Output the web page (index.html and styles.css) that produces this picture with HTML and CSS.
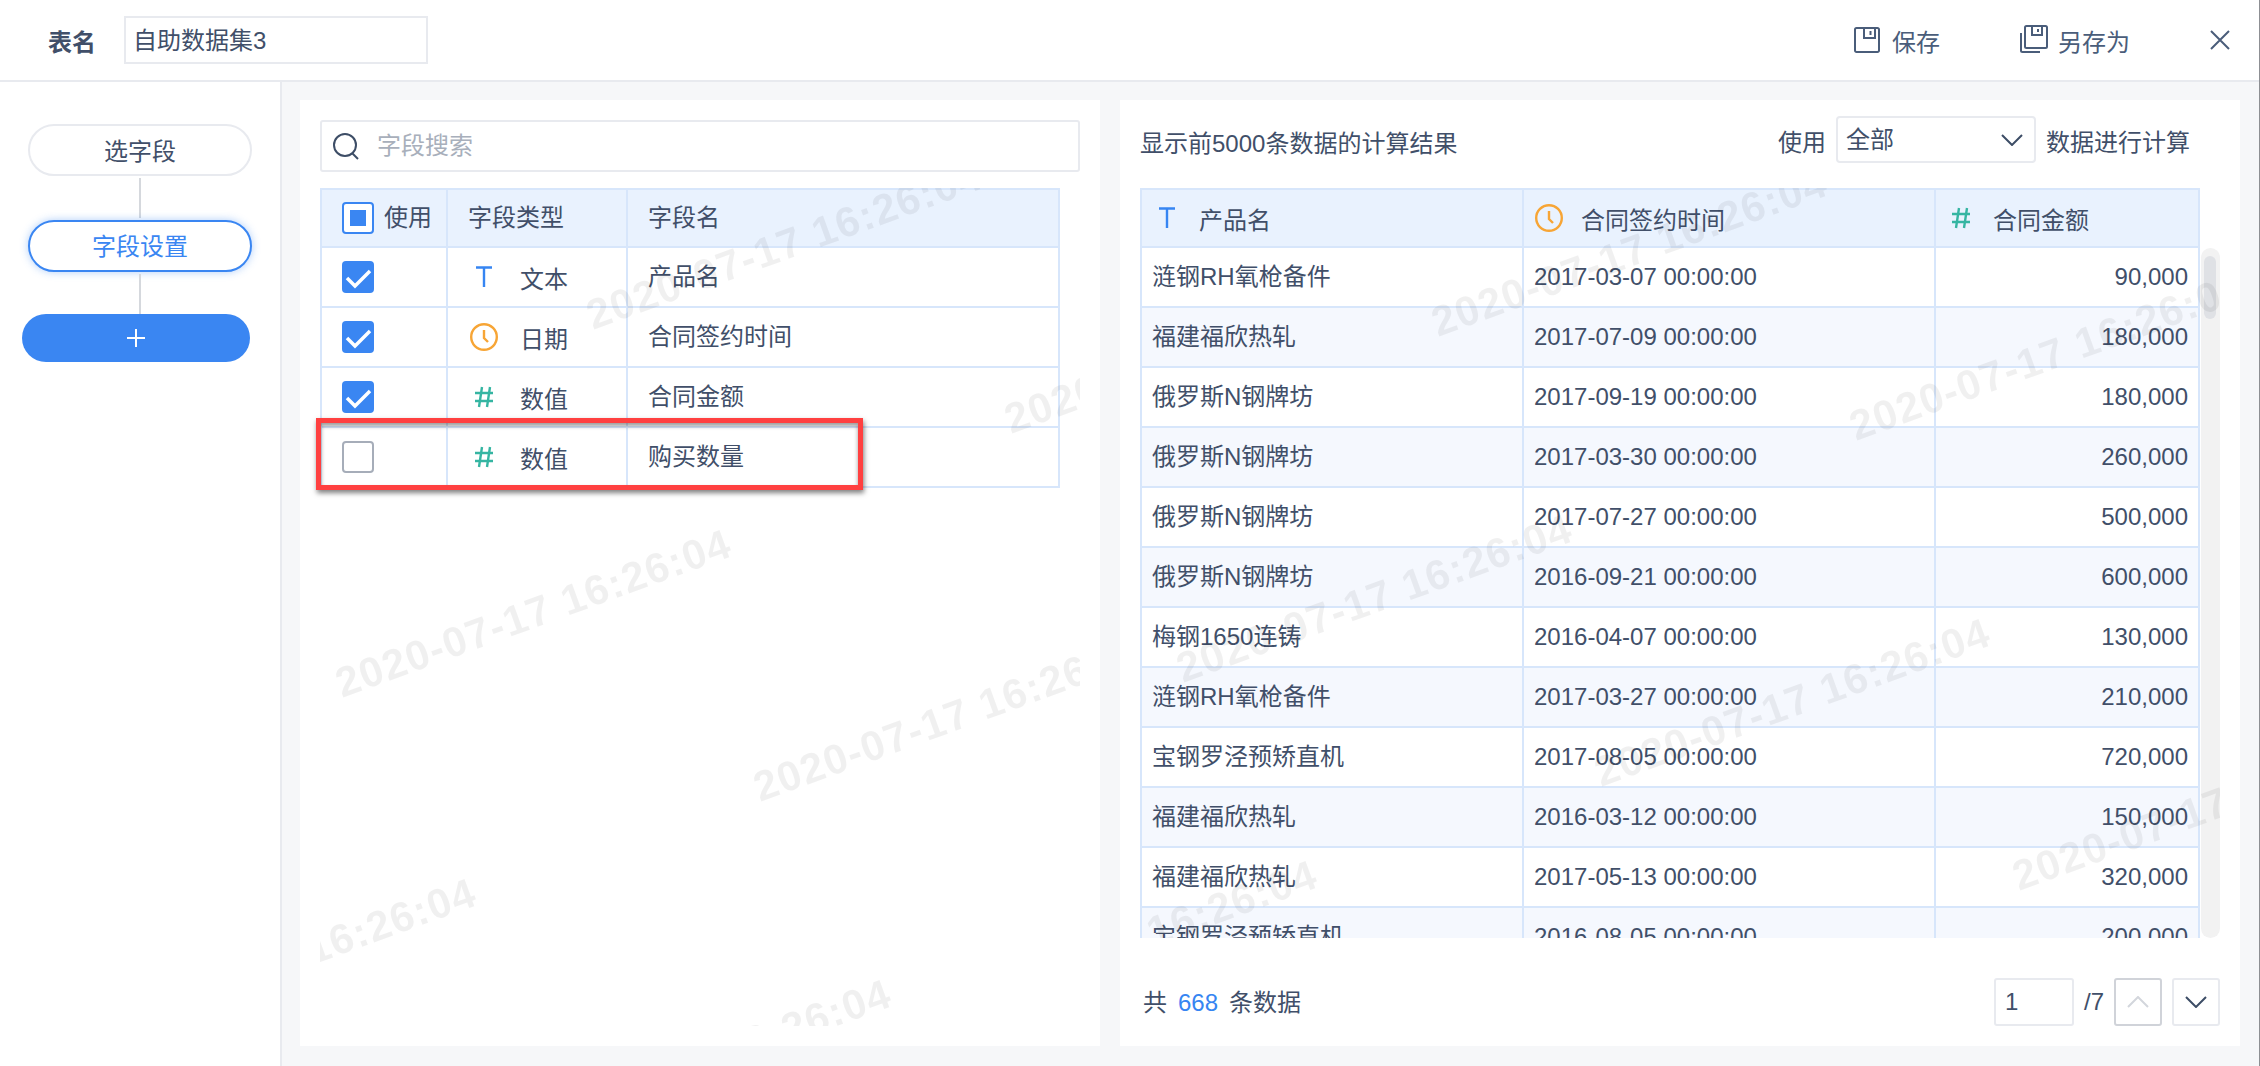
FILE: index.html
```html
<!DOCTYPE html>
<html lang="zh-CN">
<head>
<meta charset="utf-8">
<title>自助数据集3</title>
<link rel="stylesheet" href="styles.css">
</head>
<body>
<div class="app">
  <header class="topbar">
    <span class="name-label">表名</span>
    <div class="name-input">自助数据集3</div>
    <div class="actions">
      <div class="action save">
        <svg class="ico-save" viewBox="0 0 26 26" fill="none" stroke="#4a5d7a" stroke-width="2"><path d="M2.500 1h21a1.500 1.500 0 0 1 1.500 1.500v21a1.500 1.500 0 0 1-1.500 1.500h-21a1.500 1.500 0 0 1-1.500-1.500v-21a1.500 1.500 0 0 1 1.500-1.500z"/><path d="M10 1v10h11V1"/><path d="M16.500 4v4"/></svg>
        <span>保存</span>
      </div>
      <div class="action saveas">
        <svg class="ico-saveas" viewBox="0 0 28 28" fill="none" stroke="#4a5d7a" stroke-width="2"><path d="M6.500 1h19a1.500 1.500 0 0 1 1.500 1.500v19a1.500 1.500 0 0 1-1.500 1.500h-19a1.500 1.500 0 0 1-1.500-1.500v-19a1.500 1.500 0 0 1 1.500-1.500z"/><path d="M12 1v9h10V1"/><path d="M18 4v3"/><path d="M1 8v17.500a1.500 1.500 0 0 0 1.500 1.500H20"/></svg>
        <span>另存为</span>
      </div>
      <svg class="ico-close" viewBox="0 0 20 20" fill="none" stroke="#4a5d7a" stroke-width="2"><path d="M1 1l18 18M19 1L1 19"/></svg>
    </div>
  </header>

  <div class="main">
    <nav class="steps">
      <div class="pill">选字段</div>
      <div class="link"></div>
      <div class="pill active">字段设置</div>
      <div class="link last"></div>
      <div class="add"><svg viewBox="0 0 18 18" stroke="#fff" stroke-width="2"><path d="M9 0v18M0 9h18"/></svg></div>
    </nav>

    <section class="panel left">
      <div class="search">
        <svg class="ico-search" viewBox="0 0 26 27" fill="none" stroke="#3d4d66" stroke-width="2"><circle cx="12" cy="12" r="11"/><path d="M19 20l6 6"/></svg>
        <span>字段搜索</span>
      </div>
      <table class="grid fields">
        <colgroup><col class="f1"><col class="f2"><col class="f3"></colgroup>
        <thead>
          <tr>
            <th><div class="use"><span class="cb partial"><i></i></span><span>使用</span></div></th>
            <th>字段类型</th>
            <th>字段名</th>
          </tr>
        </thead>
        <tbody>
          <tr>
            <td><span class="cb on"><svg viewBox="0 0 32 32" fill="none" stroke="#fff" stroke-width="3.500"><path d="M5 17l8 8 15-15"/></svg></span></td>
            <td><div class="ftype"><svg class="ti" viewBox="0 0 28 22" fill="none" stroke="#3685f2" stroke-width="2.400"><path d="M6 1.500h16M14 1.500V21"/></svg><span>文本</span></div></td>
            <td>产品名</td>
          </tr>
          <tr>
            <td><span class="cb on"><svg viewBox="0 0 32 32" fill="none" stroke="#fff" stroke-width="3.500"><path d="M5 17l8 8 15-15"/></svg></span></td>
            <td><div class="ftype"><svg class="ti" viewBox="0 0 28 28" fill="none" stroke="#f7a535" stroke-width="2.400"><circle cx="14" cy="14" r="12.800"/><path d="M14 7v8l4 4"/></svg><span>日期</span></div></td>
            <td>合同签约时间</td>
          </tr>
          <tr>
            <td><span class="cb on"><svg viewBox="0 0 32 32" fill="none" stroke="#fff" stroke-width="3.500"><path d="M5 17l8 8 15-15"/></svg></span></td>
            <td><div class="ftype"><svg class="ti" viewBox="0 0 28 22" fill="none" stroke="#35b5a2" stroke-width="2.400"><path d="M5 7h18M5 15h18M12 1L9 21M20 1l-3 20"/></svg><span>数值</span></div></td>
            <td>合同金额</td>
          </tr>
          <tr>
            <td><span class="cb off"></span></td>
            <td><div class="ftype"><svg class="ti" viewBox="0 0 28 22" fill="none" stroke="#35b5a2" stroke-width="2.400"><path d="M5 7h18M5 15h18M12 1L9 21M20 1l-3 20"/></svg><span>数值</span></div></td>
            <td>购买数量</td>
          </tr>
        </tbody>
      </table>
      <svg class="wm wm-left" viewBox="320 188 760 838">
        <text transform="translate(593 330) rotate(-20)">2020-07-17 16:26:04</text>
        <text transform="translate(342 698) rotate(-20)">2020-07-17 16:26:04</text>
        <text transform="translate(1011 434) rotate(-20)">2020-07-17 16:26:04</text>
        <text transform="translate(760 802) rotate(-20)">2020-07-17 16:26:04</text>
        <text transform="translate(87 1047) rotate(-20)">2020-07-17 16:26:04</text>
        <text transform="translate(502 1148) rotate(-20)">2020-07-17 16:26:04</text>
      </svg>
      <div class="callout"></div>
    </section>

    <section class="panel right">
      <div class="toolbar">
        <span class="title">显示前5000条数据的计算结果</span>
        <div class="scope">
          <span class="lbl">使用</span>
          <div class="select">
            <span>全部</span>
            <svg viewBox="0 0 22 12" fill="none" stroke="#3d4d66" stroke-width="2"><path d="M1 1l10 10L21 1"/></svg>
          </div>
          <span class="lbl">数据进行计算</span>
        </div>
      </div>
      <div class="result">
        <table class="grid data">
          <colgroup><col class="d1"><col class="d2"><col class="d3"></colgroup>
          <thead>
            <tr>
              <th><div class="dhead"><svg class="ti" viewBox="0 0 28 22" fill="none" stroke="#3685f2" stroke-width="2.400"><path d="M6 1.500h16M14 1.500V21"/></svg><span>产品名</span></div></th>
              <th><div class="dhead"><svg class="ti" viewBox="0 0 28 28" fill="none" stroke="#f7a535" stroke-width="2.400"><circle cx="14" cy="14" r="12.800"/><path d="M14 7v8l4 4"/></svg><span>合同签约时间</span></div></th>
              <th><div class="dhead"><svg class="ti" viewBox="0 0 28 22" fill="none" stroke="#35b5a2" stroke-width="2.400"><path d="M5 7h18M5 15h18M12 1L9 21M20 1l-3 20"/></svg><span>合同金额</span></div></th>
            </tr>
          </thead>
          <tbody>
            <tr><td>涟钢RH氧枪备件</td><td>2017-03-07 00:00:00</td><td class="num">90,000</td></tr>
            <tr><td>福建福欣热轧</td><td>2017-07-09 00:00:00</td><td class="num">180,000</td></tr>
            <tr><td>俄罗斯N钢牌坊</td><td>2017-09-19 00:00:00</td><td class="num">180,000</td></tr>
            <tr><td>俄罗斯N钢牌坊</td><td>2017-03-30 00:00:00</td><td class="num">260,000</td></tr>
            <tr><td>俄罗斯N钢牌坊</td><td>2017-07-27 00:00:00</td><td class="num">500,000</td></tr>
            <tr><td>俄罗斯N钢牌坊</td><td>2016-09-21 00:00:00</td><td class="num">600,000</td></tr>
            <tr><td>梅钢1650连铸</td><td>2016-04-07 00:00:00</td><td class="num">130,000</td></tr>
            <tr><td>涟钢RH氧枪备件</td><td>2017-03-27 00:00:00</td><td class="num">210,000</td></tr>
            <tr><td>宝钢罗泾预矫直机</td><td>2017-08-05 00:00:00</td><td class="num">720,000</td></tr>
            <tr><td>福建福欣热轧</td><td>2016-03-12 00:00:00</td><td class="num">150,000</td></tr>
            <tr><td>福建福欣热轧</td><td>2017-05-13 00:00:00</td><td class="num">320,000</td></tr>
            <tr><td>宝钢罗泾预矫直机</td><td>2016-08-05 00:00:00</td><td class="num">200,000</td></tr>
          </tbody>
        </table>
        <div class="scrolltrack"><div class="scrollthumb"></div></div>
      </div>
      <svg class="wm wm-right" viewBox="1140 188 1080 750">
        <text transform="translate(1438 337) rotate(-20)">2020-07-17 16:26:04</text>
        <text transform="translate(1856 441) rotate(-20)">2020-07-17 16:26:04</text>
        <text transform="translate(1183 683) rotate(-20)">2020-07-17 16:26:04</text>
        <text transform="translate(1601 787) rotate(-20)">2020-07-17 16:26:04</text>
        <text transform="translate(2019 891) rotate(-20)">2020-07-17 16:26:04</text>
        <text transform="translate(928 1029) rotate(-20)">2020-07-17 16:26:04</text>
      </svg>
      <div class="pager">
        <div class="total">共<span class="count">668</span>条数据</div>
        <div class="pages">
          <div class="page-input">1</div>
          <span class="page-total">/7</span>
          <div class="page-btn disabled"><svg viewBox="0 0 22 12" fill="none" stroke="#d3d6dc" stroke-width="2"><path d="M1 11L11 1l10 10"/></svg></div>
          <div class="page-btn"><svg viewBox="0 0 22 12" fill="none" stroke="#3d4d66" stroke-width="2"><path d="M1 1l10 10L21 1"/></svg></div>
        </div>
      </div>
    </section>
  </div>
</div>
</body>
</html>
```

FILE: styles.css
```css
* { box-sizing: border-box; }
html, body { margin: 0; padding: 0; }
body {
  width: 2260px;
  height: 1066px;
  overflow: hidden;
  font-family: "Liberation Sans", "Noto Sans CJK SC", sans-serif;
  font-size: 24px;
  color: #414f69;
  background: #fff;
}
.app {
  width: 2260px;
  height: 1066px;
  display: flex;
  flex-direction: column;
  border-right: 1px solid #8d8f93;
}

/* top bar */
.topbar {
  height: 82px;
  flex: none;
  display: flex;
  align-items: center;
  padding-left: 48px;
  border-bottom: 2px solid #e8eaef;
}
.name-label { font-weight: 700; width: 76px; }
.name-input {
  width: 304px;
  height: 48px;
  border: 2px solid #e8eaef;
  padding: 0 0 3px 7px;
  display: flex;
  align-items: center;
}
.actions { margin-left: auto; display: flex; align-items: center; }
.action { display: flex; align-items: center; color: #4a5d7a; }
.ico-save { width: 26px; height: 26px; margin-right: 12px; }
.ico-saveas { width: 28px; height: 28px; margin-right: 10px; margin-top: -2px; }
.save { margin-right: 80px; }
.saveas { margin-right: 80px; }
.ico-close { width: 20px; height: 20px; margin-right: 29px; }

/* layout */
.main { flex: 1; min-height: 0; display: flex; background: #f6f7f9; }
.steps {
  width: 282px;
  flex: none;
  background: #fff;
  border-right: 2px solid #e8eaef;
  padding: 42px 0 0 22px;
  display: flex;
  flex-direction: column;
  align-items: flex-start;
}
.pill {
  margin-left: 6px;
  width: 224px;
  height: 52px;
  border: 2px solid #e8eaef;
  border-radius: 26px;
  padding-bottom: 2px;
  display: flex;
  align-items: center;
  justify-content: center;
  background: #fff;
}
.pill.active {
  border-color: #3a86f2;
  color: #3a86f2;
  padding-bottom: 4px;
  box-shadow: 0 0 8px rgba(58, 134, 242, .4);
}
.link {
  width: 2px;
  height: 40px;
  margin: 2px 0 2px 117px;
  background: #d5d8dd;
}
.link.last { margin-bottom: 0; }
.add {
  width: 228px;
  height: 48px;
  border-radius: 24px;
  background: #3a86f2;
  display: flex;
  align-items: center;
  justify-content: center;
}
.add svg { width: 18px; height: 18px; }

.panel {
  position: relative;
  background: #fff;
  height: 946px;
  margin-top: 18px;
  padding: 20px;
}
.panel.left { width: 800px; margin-left: 18px; }
.panel.right { width: 1120px; margin-left: 20px; padding-top: 16px; }

/* search */
.search {
  height: 52px;
  border: 2px solid #e8eaef;
  border-radius: 3px;
  display: flex;
  align-items: center;
  padding-left: 11px;
  color: #a8afbb;
}
.search span { margin-bottom: 5px; }
.ico-search { width: 26px; height: 27px; margin-right: 18px; }

/* tables */
.grid {
  border-collapse: separate;
  border-spacing: 0;
  table-layout: fixed;
  border-top: 2px solid #d7e6fb;
  border-left: 2px solid #d7e6fb;
}
.grid th, .grid td {
  padding: 0;
  border-right: 2px solid #d7e6fb;
  border-bottom: 2px solid #d7e6fb;
  font-weight: 400;
  text-align: left;
  line-height: 32px;
  height: 60px;
}
.grid th { height: 58px; background: #e9f2fe; }

.fields { margin-top: 16px; width: 740px; }
.f1 { width: 126px; }
.f2 { width: 180px; }
.f3 { width: 432px; }
.fields th, .fields td { padding-left: 20px; }
.fields td:nth-child(2) { padding-left: 0; }
.use { display: flex; align-items: center; gap: 10px; }
.cb {
  display: block;
  width: 32px;
  height: 32px;
  border-radius: 4px;
}
.cb svg { display: block; width: 32px; height: 32px; }
.cb.on { background: #3a86f2; }
.cb.off { border: 2px solid #a6adb9; background: #fff; }
.cb.partial {
  border: 2px solid #3a86f2;
  background: #fff;
  display: flex;
  align-items: center;
  justify-content: center;
}
.cb.partial i { display: block; width: 16px; height: 16px; background: #3a86f2; }
.ftype { display: flex; align-items: center; padding-left: 22px; gap: 22px; }
.ftype span { margin-top: 6px; }
.ti { width: 28px; height: 28px; flex: none; }

.result { position: relative; height: 750px; overflow: hidden; }
.data { width: 1060px; }
.d1 { width: 382px; }
.d2 { width: 412px; }
.d3 { width: 264px; }
.data td { padding: 0 10px; }
.data tbody tr:nth-child(even) td { background: #f5f8fe; }
.data .num { text-align: right; }
.dhead { display: flex; align-items: center; padding-left: 11px; gap: 18px; }
.dhead span { margin-top: 6px; }

.scrolltrack {
  position: absolute;
  left: 1061px;
  top: 60px;
  width: 19px;
  bottom: 0;
  border-radius: 10px;
  background: #f2f2f2;
}
.scrollthumb {
  margin: 8px 0 0 3px;
  width: 12px;
  height: 63px;
  border-radius: 6px;
  background: #dfe1e5;
}

/* toolbar */
.toolbar { display: flex; align-items: center; height: 47px; margin-bottom: 25px; }
.title { margin-top: 4px; }
.scope { margin-left: auto; margin-right: 30px; display: flex; align-items: center; }
.lbl { margin-top: 2px; }
.select {
  width: 200px;
  height: 47px;
  margin: 0 10px;
  border: 2px solid #e8eaef;
  border-radius: 4px;
  padding: 0 11px 0 8px;
  display: flex;
  align-items: center;
  justify-content: space-between;
}
.select span { margin-bottom: 5px; }
.select svg { width: 22px; height: 12px; }

/* pager */
.pager { display: flex; align-items: center; height: 48px; margin-top: 40px; }
.total { margin-left: 3px; padding-bottom: 3px; }
.count { color: #3685f2; margin: 0 11px; }
.pages { margin-left: auto; display: flex; align-items: center; }
.page-input {
  width: 80px;
  height: 48px;
  border: 2px solid #e8eaef;
  border-radius: 3px;
  padding-left: 9px;
  display: flex;
  align-items: center;
}
.page-total { margin: 0 10px; width: 20px; }
.page-btn {
  width: 48px;
  height: 48px;
  border: 2px solid #e8eaef;
  border-radius: 3px;
  display: flex;
  align-items: center;
  justify-content: center;
}
.page-btn.disabled { border-color: #d0d3d9; margin-right: 10px; }
.page-btn svg { width: 22px; height: 12px; }

/* overlays */
.wm {
  position: absolute;
  left: 20px;
  top: 88px;
  pointer-events: none;
  font-family: "Liberation Sans", sans-serif;
  font-weight: 700;
  font-size: 42px;
  letter-spacing: 1.200px;
  fill: rgba(0, 0, 0, .06);
  filter: blur(.6px);
}
.wm-left { width: 760px; height: 838px; }
.wm-right { width: 1080px; height: 750px; }
.callout {
  position: absolute;
  left: 16px;
  top: 318px;
  width: 547px;
  height: 72px;
  border: 5px solid #ff4040;
  box-shadow: 1px 3px 5px rgba(0, 0, 0, .5), inset 0 3px 4px rgba(0, 0, 0, .4);
  pointer-events: none;
}
```
